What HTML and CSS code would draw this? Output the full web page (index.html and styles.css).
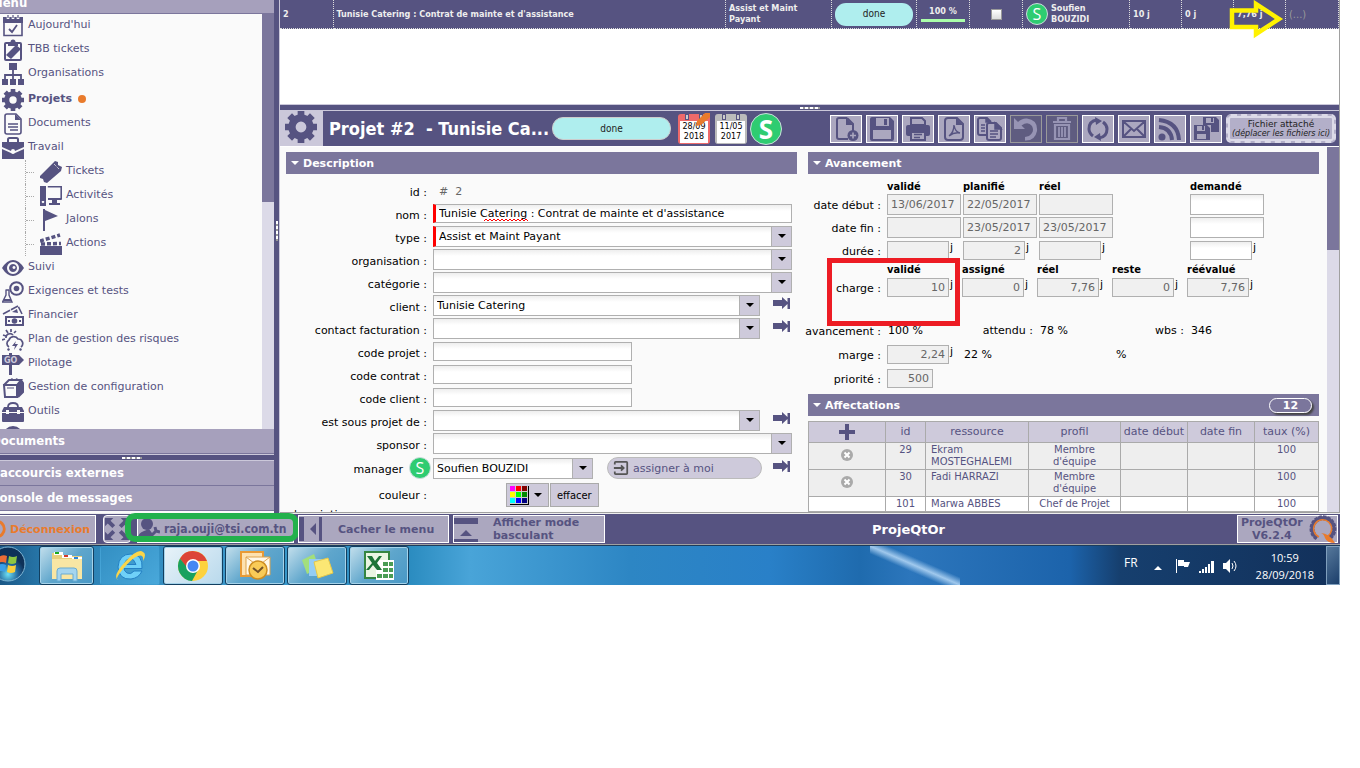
FILE: index.html
```html
<!DOCTYPE html>
<html lang="fr">
<head>
    <meta charset="UTF-8">
    <meta name="viewport" content="width=device-width, initial-scale=1.0">
    <title>ProjeQtOr</title>
    <link rel="stylesheet" href="styles.css">
</head>
<body>

<!-- icons -->
<svg class="sprite" aria-hidden="true">
    <symbol id="i-today" viewBox="0 0 22 22"><path d="M2 3h18v17.500H2z" fill="none" stroke="currentColor" stroke-width="1.600"/><path d="M1 2h20v6H1z"/><path d="M6 0v4M11 0v4M16 0v4" stroke="#fafafa" stroke-width="2.600"/><path d="M6 0v3M11 0v3M16 0v3" stroke="currentColor" stroke-width="1.200"/><path d="M7 14l3 3 5-7" fill="none" stroke="currentColor" stroke-width="1.800"/></symbol>
    <symbol id="i-tbb" viewBox="0 0 22 22"><rect x="3" y="4" width="16" height="17" rx="1" fill="none" stroke="currentColor" stroke-width="2"/><path d="M6 7V4h3a2 2 0 0 1 4 0h3v3z"/><circle cx="11" cy="3" r="2.500"/><path d="M4 16L14 6l5 4L9 20z"/></symbol>
    <symbol id="i-org" viewBox="0 0 22 22"><path d="M7 0h8v7H7zM0 16h6v6H0zM8 16h6v6H8zM16 16h6v6h-6z"/><path d="M11 6v11M3 17v-5h16v5" fill="none" stroke="currentColor" stroke-width="1.800"/></symbol>
    <symbol id="i-gear" viewBox="0 0 22 22"><circle cx="11" cy="11" r="6.200" fill="none" stroke="currentColor" stroke-width="5"/><path d="M11 0v4M11 18v4M0 11h4M18 11h4M3.200 3.200l3 3M15.800 15.800l3 3M3.200 18.800l3-3M15.800 6.200l3-3" stroke="currentColor" stroke-width="4.600"/></symbol>
    <symbol id="i-doc" viewBox="0 0 22 22"><path d="M5 1h9l5 5v13a2 2 0 0 1-2 2H5a2 2 0 0 1-2-2V3a2 2 0 0 1 2-2z" fill="none" stroke="currentColor" stroke-width="1.600"/><path d="M13 1v6h6z"/><path d="M6 11h10M6 14h10M8 17h8" stroke="currentColor" stroke-width="1.500"/></symbol>
    <symbol id="i-case" viewBox="0 0 22 22"><path d="M6 6V2.500Q6 1 7.500 1h7Q16 1 16 2.500V6" fill="none" stroke="currentColor" stroke-width="2"/><path d="M0 5h22v5l-9 4a2 2 0 0 0-4 0L0 10zM0 12l9 4q2 2 4 0l9-4v10H0z"/></symbol>
    <symbol id="i-ticket" viewBox="0 0 22 22"><path d="M0 15L15 0l3 1 0 3 4 2-1 4L7 22l-3-1-1-3-3-1z"/><path d="M14 3l5 5" stroke="#fafafa" stroke-dasharray="1 1"/></symbol>
    <symbol id="i-screen" viewBox="0 0 22 22"><path fill-rule="evenodd" d="M0 1h6v20H0zM2 16a1.300 1.300 0 1 0 2 0z"/><path d="M7.800 1.800h13.400V14H9" fill="none" stroke="currentColor" stroke-width="1.600"/><path d="M8 13h13v2H8zM12 15h5v3h3v2H9v-2h3z"/></symbol>
    <symbol id="i-flag" viewBox="0 0 22 22"><path d="M3 0h2v22H3zM5 1l13 6-13 5z"/></symbol>
    <symbol id="i-clap" viewBox="0 0 22 22"><path d="M0 13h22v9H0z"/><path d="M1 11l20-.500M0 8l20-6" stroke="currentColor" stroke-width="3.500" stroke-dasharray="4 2"/></symbol>
    <symbol id="i-eye" viewBox="0 0 22 22"><path fill-rule="evenodd" d="M0 11Q5 3 11 3t11 8q-5 8-11 8T0 11zm11-6a6 6 0 1 0 .010 0z"/><path fill-rule="evenodd" d="M11 7a4 4 0 1 0 .010 0zm1 2a1.500 1.500 0 1 1-.010 0z"/></symbol>
    <symbol id="i-test" viewBox="0 0 22 22"><circle cx="14.500" cy="7.500" r="6.300" fill="none" stroke="currentColor" stroke-width="2"/><circle cx="14.500" cy="7.500" r="2.800"/><path d="M3.500 9h4M4 9v5l-3.500 7h9.500L7 14V9" fill="none" stroke="currentColor" stroke-width="1.400"/><path d="M2 18h7v2H2z"/></symbol>
    <symbol id="i-money" viewBox="0 0 22 22"><path fill-rule="evenodd" d="M3 11h19v10H3zm2 2v6h15v-6z"/><circle cx="12.500" cy="16" r="2.800"/><path d="M6 16h2M17 16h2" stroke="currentColor" stroke-width="2"/><path d="M1 9L16 1l4 8" fill="none" stroke="currentColor" stroke-width="1.600" stroke-dasharray="8 1"/><path d="M10 7l5-3 1 4z"/></symbol>
    <symbol id="i-risk" viewBox="0 0 22 22"><path d="M1 6l3 1M4 1l2 3M9 0v3M14 2l-2 2M0 11l3-1M4 9a4 4 0 0 1 7-3M7 18a4 4 0 0 1 0-7 5 5 0 0 1 9-1 4.500 4.500 0 0 1 3 8" fill="none" stroke="currentColor" stroke-width="1.700"/><path d="M14 12l-4 5h3l-1 4 4-6h-3zM6 19l2 1-1 2-2-1zM18 19l2 1-1 2-2-1z"/></symbol>
    <symbol id="i-go" viewBox="0 0 22 22"><path d="M7 0h3v22H7z"/><path d="M0 2h17l5 5-5 5H0z"/><text x="2" y="10" font-size="8" font-weight="bold" fill="#cecadb">GO</text></symbol>
    <symbol id="i-box" viewBox="0 0 22 22"><path d="M2 8h13v12H3zM2 8l5-5h12l-4 5M19 3l2 3v9l-5 5" fill="none" stroke="currentColor" stroke-width="2"/><path d="M15 8l5-5 1 3v9l-5 5zM6 4l4-3 2 2 3-2 2 3z"/><path d="M5 11h7" stroke="currentColor"/></symbol>
    <symbol id="i-tools" viewBox="0 0 22 22"><path d="M6 6q0-4 5-4t5 4" fill="none" stroke="currentColor" stroke-width="1.800"/><path d="M2 6h18l2 4v10q0 1-1 1H1q-1 0-1-1V10z"/><path d="M0 11.500h22" stroke="#fafafa" stroke-width="1"/><path d="M4 9h3v4H4zM15 9h3v4h-3z" fill="#fafafa"/></symbol>
    <symbol id="i-globe" viewBox="0 0 22 22"><circle cx="11" cy="11" r="9" fill="none" stroke="currentColor" stroke-width="2"/><path d="M3 7q8-7 16 0M11 2v18" fill="none" stroke="currentColor" stroke-width="2"/></symbol>

    <symbol id="b-new" viewBox="0 0 26 24"><path d="M14 1H6Q4 1 4 3v17q0 2 2 2h9M14 1l6 6v7" fill="none" stroke="currentColor" stroke-width="2"/><path d="M13 1l7 7h-7z"/><circle cx="20" cy="18.500" r="5.500"/><path d="M20 15.500v6M17 18.500h6" stroke="#aba7bf" stroke-width="1.600"/></symbol>
    <symbol id="b-save" viewBox="0 0 26 24"><path fill-rule="evenodd" d="M3 0h18l4 4v18q0 2-2 2H3q-2 0-2-2V2q0-2 2-2zM7 1v8h13V1zM4 13v9h18v-9z"/><path d="M15 2h3v6h-3z"/></symbol>
    <symbol id="b-print" viewBox="0 0 26 24"><path d="M6 1h11l3 3v4H6z" fill="none" stroke="currentColor" stroke-width="2"/><path d="M3 8h20q2 0 2 2v7q0 2-2 2H3q-2 0-2-2v-7q0-2 2-2z"/><path d="M6 15h14v8H6z" fill="#aba7bf" stroke="currentColor" stroke-width="2"/><path d="M9 17.500h8M9 20.500h6" stroke="currentColor" stroke-width="1.500"/></symbol>
    <symbol id="b-pdf" viewBox="0 0 26 24"><path d="M16 1H7Q4 1 4 4v16q0 3 3 3h12q3 0 3-3V7z" fill="none" stroke="currentColor" stroke-width="2"/><path d="M15 1v7h7z"/><path d="M8 19q5-4 5-11 1 7 6 8-6-1-11 3z" fill="none" stroke="currentColor" stroke-width="1.400"/></symbol>
    <symbol id="b-copy" viewBox="0 0 26 24"><path d="M9 18H3q-2 0-2-2V3q0-2 2-2h7l4 4M12 6h7l5 5v10q0 2-2 2H12q-2 0-2-2V8q0-2 2-2z" fill="none" stroke="currentColor" stroke-width="2"/><path d="M18 6v6h6zM9 1v4h4zM4 8h4M4 11h4M4 14h4M13 14h8M13 17h8M13 20h6" stroke="currentColor" stroke-width="1.500"/></symbol>
    <symbol id="b-undo" viewBox="0 0 26 24"><path d="M1 1v11h11L8.500 8.500Q15 4 19 9q3 6-3 10l-4 1v3.500Q22 24 24 14 25 3 14 1.500 9 1 5 5z"/></symbol>
    <symbol id="b-trash" viewBox="0 0 26 24"><path d="M4 5h18M9 4V1h8v3M6 8h14v14H6z" fill="none" stroke="currentColor" stroke-width="2.200"/><path d="M10 10v10M13 10v10M16 10v10" stroke="currentColor" stroke-width="1.800"/></symbol>
    <symbol id="b-sync" viewBox="0 0 26 24"><path d="M12 3q-8 1-8 9 0 4 4 7M14 21q8-1 8-9 0-4-4-7" fill="none" stroke="currentColor" stroke-width="3"/><path d="M10 0l7 4-6 4zM16 24l-7-4 6-4z"/></symbol>
    <symbol id="b-mail" viewBox="0 0 26 24"><path d="M2 4h22v16H2zM3 5l10 9L23 5M3 19l7-7M23 19l-7-7" fill="none" stroke="currentColor" stroke-width="2"/></symbol>
    <symbol id="b-rss" viewBox="0 0 26 24"><circle cx="5" cy="20" r="3.500"/><path d="M2 10q12 1 13 13M2 3q19 2 20 20" fill="none" stroke="currentColor" stroke-width="4"/></symbol>
    <symbol id="b-multi" viewBox="0 0 26 24"><path fill-rule="evenodd" d="M10 0h13l3 3v12h-8V8h-8zm3 1v5h8V1zM1 8h13l3 3v12H1zm3 1v5h8V9zm0 8v5h9v-5z"/><path d="M9 9h2v4H9zM18 1h2v4h-2z"/></symbol>
    <symbol id="goto" viewBox="0 0 17 12"><path d="M0 3h9V0l5.500 5V1H17v11h-2.500V7L9 12V9H0z"/></symbol>
</svg>

<div class="desktop">
    <div class="app">
        <nav class="left">
            <h2 class="bar menuBar">Menu</h2>
            <div class="tree">
                <ul class="menu">
                    <li><svg><use href="#i-today"/></svg><a href="#">Aujourd'hui</a></li>
                    <li><svg><use href="#i-tbb"/></svg><a href="#">TBB tickets</a></li>
                    <li><svg><use href="#i-org"/></svg><a href="#">Organisations</a></li>
                    <li class="current"><svg><use href="#i-gear"/></svg><a href="#">Projets</a><i class="dot"></i></li>
                    <li><svg><use href="#i-doc"/></svg><a href="#">Documents</a></li>
                    <li><svg><use href="#i-case"/></svg><a href="#">Travail</a></li>
                    <li class="sub"><svg><use href="#i-ticket"/></svg><a href="#">Tickets</a></li>
                    <li class="sub"><svg><use href="#i-screen"/></svg><a href="#">Activités</a></li>
                    <li class="sub"><svg><use href="#i-flag"/></svg><a href="#">Jalons</a></li>
                    <li class="sub"><svg><use href="#i-clap"/></svg><a href="#">Actions</a></li>
                    <li><svg><use href="#i-eye"/></svg><a href="#">Suivi</a></li>
                    <li><svg><use href="#i-test"/></svg><a href="#">Exigences et tests</a></li>
                    <li><svg><use href="#i-money"/></svg><a href="#">Financier</a></li>
                    <li><svg><use href="#i-risk"/></svg><a href="#">Plan de gestion des risques</a></li>
                    <li><svg><use href="#i-go"/></svg><a href="#">Pilotage</a></li>
                    <li><svg><use href="#i-box"/></svg><a href="#">Gestion de configuration</a></li>
                    <li><svg><use href="#i-tools"/></svg><a href="#">Outils</a></li>
                    <li><svg><use href="#i-globe"/></svg></li>
                </ul>
                <div class="scroll"><div class="thumb menuThumb"></div></div>
            </div>
            <h2 class="bar">Documents</h2>
            <div class="hsplit"><i class="grip"></i></div>
            <h2 class="bar">Raccourcis externes</h2>
            <h2 class="bar">Console de messages</h2>
        </nav>
        <div class="vsplit"><i class="grip vertical"></i></div>

        <main class="main">
            <div class="planning">
                <table class="list">
                    <colgroup><col class="cId"><col><col class="cType"><col class="cState"><col class="cPct"><col class="cPct"><col class="cWho"><col class="cLoad"><col class="cLoad"><col class="cLoad"><col class="cMore"></colgroup>
                    <tr>
                        <td>2</td>
                        <td>Tunisie Catering : Contrat de mainte et d'assistance</td>
                        <td>Assist et Maint<br>Payant</td>
                        <td class="mid"><span class="pill small">done</span></td>
                        <td class="mid"><span class="progress">100 %</span></td>
                        <td class="mid"><input type="checkbox" class="check" aria-label="sélection"></td>
                        <td><div class="who"><span class="avatar">S</span><span>Soufien<br>BOUZIDI</span></div></td>
                        <td>10 j</td>
                        <td>0 j</td>
                        <td class="anchor">7,76 j
                            <svg class="arrowMark" viewBox="0 0 58 40"><path d="M4 11.500h24V5l23 15-23 15v-7H4z" fill="none" stroke="#fff200" stroke-width="4.500"/></svg>
                        </td>
                        <td class="more">(...)</td>
                    </tr>
                </table>
            </div>
            <div class="hsplit"><i class="grip"></i></div>

            <header class="title">
                <span class="titleIcon"><svg><use href="#i-gear"/></svg></span>
                <h1>Projet #2 &nbsp;- Tunisie Ca...</h1>
                <span class="pill">done</span>
                <span class="cal red"><i></i><i></i><b>28/09<br>2018</b><svg viewBox="0 0 14 14"><path d="M0 14l1-5 8-8h5v4l-9 8z" fill="#e97b2c"/></svg></span>
                <span class="cal"><i></i><i></i><b>11/05<br>2017</b></span>
                <span class="avatar big">S</span>
                <div class="tools">
                    <button aria-label="nouveau"><svg><use href="#b-new"/></svg></button>
                    <button aria-label="enregistrer"><svg><use href="#b-save"/></svg></button>
                    <button aria-label="imprimer"><svg><use href="#b-print"/></svg></button>
                    <button aria-label="pdf"><svg><use href="#b-pdf"/></svg></button>
                    <button aria-label="copier"><svg><use href="#b-copy"/></svg></button>
                    <button aria-label="annuler" class="off"><svg><use href="#b-undo"/></svg></button>
                    <button aria-label="supprimer" class="off"><svg><use href="#b-trash"/></svg></button>
                    <button aria-label="rafraîchir"><svg><use href="#b-sync"/></svg></button>
                    <button aria-label="mail"><svg><use href="#b-mail"/></svg></button>
                    <button aria-label="flux"><svg><use href="#b-rss"/></svg></button>
                    <button aria-label="multiple"><svg><use href="#b-multi"/></svg></button>
                    <button class="attach">Fichier attaché<em>(déplacer les fichiers ici)</em></button>
                </div>
            </header>

            <div class="detail">
                <div class="columns">
                    <section>
                        <h3>Description</h3>
                        <div class="form">
                            <div class="row first"><span class="label">id :</span><span class="ident"># &nbsp;2</span></div>
                            <div class="row"><label for="nom">nom :</label><div class="spell"><input id="nom" class="required" type="text" spellcheck="false" value="Tunisie Catering : Contrat de mainte et d'assistance"><svg viewBox="0 0 46 3"><path d="M0 2l2-2 2 2 2-2 2 2 2-2 2 2 2-2 2 2 2-2 2 2 2-2 2 2 2-2 2 2 2-2 2 2 2-2 2 2 2-2 2 2 2-2 2 2" fill="none" stroke="#f00"/></svg></div></div>
                            <div class="row"><label for="type">type :</label><div class="combo"><select id="type" class="required"><option>Assist et Maint Payant</option></select></div></div>
                            <div class="row"><label for="orga">organisation :</label><div class="combo"><select id="orga"><option></option></select></div></div>
                            <div class="row"><label for="cat">catégorie :</label><div class="combo"><select id="cat"><option></option></select></div></div>
                            <div class="row"><label for="client">client :</label><div class="combo"><select id="client"><option>Tunisie Catering</option></select></div><svg class="goto"><use href="#goto"/></svg></div>
                            <div class="row"><label for="contact">contact facturation :</label><div class="combo"><select id="contact"><option></option></select></div><svg class="goto"><use href="#goto"/></svg></div>
                            <div class="row"><label for="cprojet">code projet :</label><input id="cprojet" class="short" type="text"></div>
                            <div class="row"><label for="ccontrat">code contrat :</label><input id="ccontrat" class="short" type="text"></div>
                            <div class="row"><label for="cclient">code client :</label><input id="cclient" class="short" type="text"></div>
                            <div class="row"><label for="parent">est sous projet de :</label><div class="combo"><select id="parent"><option></option></select></div><svg class="goto"><use href="#goto"/></svg></div>
                            <div class="row"><label for="sponsor">sponsor :</label><div class="combo"><select id="sponsor"><option></option></select></div></div>
                            <div class="row tall manager"><label for="manager">manager</label><span class="avatar">S</span><div class="combo person"><select id="manager"><option>Soufien BOUZIDI</option></select></div><button class="assign"><svg viewBox="0 0 18 18"><path d="M2 5V3q0-1 1-1h12q1 0 1 1v12q0 1-1 1H3q-1 0-1-1v-2M1 9h11M9 6l3 3-3 3" fill="none" stroke="#555" stroke-width="2"/></svg>assigner à moi</button><svg class="goto"><use href="#goto"/></svg></div>
                            <div class="row tall"><span class="label">couleur :</span>
                                <div class="colour"><button class="grey" aria-label="choisir"><span class="palette"><i></i><i></i><i></i><i></i><i></i><i></i><i></i><i></i><i></i></span><i class="down"></i></button><button class="grey">effacer</button></div>
                            </div>
                            <div class="caption">description :</div>
                        </div>
                    </section>

                    <section>
                        <h3>Avancement</h3>
                        <div class="grid">
                            <b class="c2">validé</b><b>planifié</b><b>réel</b><b class="c6">demandé</b>
                            <label for="dd1" class="c1">date début :</label><input id="dd1" readonly value="13/06/2017"><input readonly value="22/05/2017" aria-label="début planifié"><input readonly aria-label="début réel"><input class="c6" aria-label="début demandé">
                            <label for="df1" class="c1">date fin :</label><input id="df1" readonly><input readonly value="23/05/2017" aria-label="fin planifiée"><input readonly value="23/05/2017" aria-label="fin réelle"><input class="c6" aria-label="fin demandée">
                            <label for="du1" class="c1">durée :</label><span class="unit"><input id="du1" readonly>j</span><span class="unit"><input readonly value="2" aria-label="durée planifiée">j</span><span class="unit"><input readonly aria-label="durée réelle">j</span><span class="unit c6"><input aria-label="durée demandée">j</span>
                        </div>
                        <div class="grid load">
                            <b class="c2">validé</b><b>assigné</b><b>réel</b><b>reste</b><b>réévalué</b>
                            <label for="ch1" class="c1">charge :</label><span class="unit anchor"><input id="ch1" readonly value="10">j<i class="redMark"></i></span><span class="unit"><input readonly value="0" aria-label="assigné">j</span><span class="unit"><input readonly value="7,76" aria-label="réel">j</span><span class="unit"><input readonly value="0" aria-label="reste">j</span><span class="unit"><input readonly value="7,76" aria-label="réévalué">j</span>
                        </div>
                        <div class="grid figures">
                            <span class="label c1">avancement :</span><span>100 %</span><span class="label">attendu :</span><span>78 %</span><span class="label wbs">wbs :</span><span class="c6">346</span>
                            <label for="marge" class="c1">marge :</label><span class="unit"><input id="marge" readonly value="2,24">j</span><span>22 %</span><span class="c5">%</span>
                            <label for="prio" class="c1">priorité :</label><span class="unit narrow"><input id="prio" readonly value="500"></span>
                        </div>

                        <h3>Affectations<span class="count">12</span></h3>
                        <table class="assigned">
                            <colgroup><col class="aAdd"><col class="aId"><col class="aRes"><col class="aProf"><col class="aDate"><col class="aDate"><col></colgroup>
                            <tr><th><svg class="plus" viewBox="0 0 16 16"><path d="M6 0h4v6h6v4h-6v6H6v-6H0V6h6z"/></svg></th><th>id</th><th>ressource</th><th>profil</th><th>date début</th><th>date fin</th><th>taux (%)</th></tr>
                            <tr class="closed"><td><svg class="cross" viewBox="0 0 12 12"><circle cx="6" cy="6" r="6"/><path d="M3.500 3.500l5 5M8.500 3.500l-5 5" stroke="#fff" stroke-width="2"/></svg></td><td>29</td><td>Ekram MOSTEGHALEMI</td><td>Membre d'équipe</td><td></td><td></td><td>100</td></tr>
                            <tr class="closed"><td><svg class="cross" viewBox="0 0 12 12"><circle cx="6" cy="6" r="6"/><path d="M3.500 3.500l5 5M8.500 3.500l-5 5" stroke="#fff" stroke-width="2"/></svg></td><td>30</td><td>Fadi HARRAZI</td><td>Membre d'équipe</td><td></td><td></td><td>100</td></tr>
                            <tr><td></td><td>101</td><td>Marwa ABBES</td><td>Chef de Projet</td><td></td><td></td><td>100</td></tr>
                        </table>
                    </section>
                </div>
                <div class="scroll"><div class="thumb detailThumb"></div></div>
            </div>
        </main>
    </div>

    <footer class="status">
        <button class="logout"><svg viewBox="0 0 20 20"><circle cx="6" cy="10" r="8" fill="none" stroke="#e97b2c" stroke-width="3"/></svg>Déconnexion</button>
        <button class="full" aria-label="plein écran"><svg viewBox="0 0 28 26"><path d="M1 1h9L7 4l5 5-3 3-5-5-3 3zM27 1v9l-3-3-5 5-3-3 5-5-3-3zM1 25v-9l3 3 5-5 3 3-5 5 3 3zM27 25h-9l3-3-5-5 3-3 5 5 3-3z"/></svg></button>
        <button class="user"><svg viewBox="0 0 22 22"><circle cx="9" cy="6" r="6"/><path d="M0 20q0-5 6-7l5-2 3 4 2 6H1z"/><path d="M11 20l8-8M17 9l1 4 4 1" fill="none" stroke="currentColor" stroke-width="3"/></svg>raja.ouji@tsi.com.tn<i class="greenMark"></i></button>
        <button class="hide"><svg viewBox="0 0 24 26"><path d="M0 1h5v24H0zM11 13l6-6v12zM20 1h3v24h-3z"/></svg><span>Cacher le menu</span></button>
        <button class="mode"><svg viewBox="0 0 24 25"><path d="M0 1h24v6H0zM6 19l6-6 6 6zM0 22h24v3H0z"/></svg><span>Afficher mode<br>basculant</span></button>
        <strong>ProjeQtOr</strong>
        <button class="version"><span>ProjeQtOr<br>V6.2.4</span><svg viewBox="0 0 28 28"><path d="M8 23a11 11 0 1 1 12 0" fill="none" stroke="#565381" stroke-width="5" stroke-dasharray="3 1"/><path d="M8 23a11 11 0 1 1 12 0" fill="none" stroke="#565381" stroke-width="3"/><path d="M10 22a9 9 0 1 1 9-1" fill="none" stroke="#e97b2c" stroke-width="1.500"/><path d="M12 18q8 0 14 10-8 0-10-5-1-4-4-5z" fill="#e97b2c"/></svg></button>
    </footer>

    <div class="taskbar">
        <button class="orb" aria-label="Démarrer"><svg viewBox="0 0 36 36"><defs><radialGradient id="orb" cy=".8"><stop offset="0" stop-color="#6ee0f5"/><stop offset=".6" stop-color="#22659b"/><stop offset="1" stop-color="#0e3158"/></radialGradient></defs><circle cx="18" cy="18" r="17" fill="url(#orb)" stroke="#7fb5d3"/><path d="M9 11q4-3 8-1l-1 7q-4-2-8 0z" fill="#ec6c35"/><path d="M19 10q4 2 8 0l-1 7q-4 2-8 0z" fill="#8dc641"/><path d="M8 19q4-2 8 0l-1 7q-4-2-8 0z" fill="#3aa0e8"/><path d="M18 19q4 2 8 0l-1 7q-4 2-8 0z" fill="#fbcf3b"/></svg></button>
        <button class="task double" aria-label="Explorateur"><svg viewBox="0 0 34 32"><path d="M2 3h10l2 3h18v22H2z" fill="#e8cf7c"/><path d="M4 2h9v3H4zM12 5h10v3H12zM22 7h10v3H22z" fill="#fff"/><path d="M5 2h4v2H5z" fill="#1ca91c"/><path d="M14 5h4v2h-4z" fill="#d43a2a"/><path d="M24 7h4v2h-4z" fill="#2b84d8"/><path d="M2 9h30v20H2z" fill="#f8e6a4"/><path d="M7 31V21q0-3 3-3h14q3 0 3 3v10h-4v-7H11v7z" fill="#a5d5ef" stroke="#69abd2"/></svg></button>
        <button class="task plain" aria-label="Internet Explorer"><svg viewBox="0 0 34 32"><path d="M11 18.500h18Q30 4 18 4T5 17q1 13 13 12 8-1 11-8H21q-3 4-7 2-3-2-3-4.500zm0-4q2-6 6-6t6 6z" fill="#6fd0f8" stroke="#2480c4"/><path d="M5 30Q-1 26 12 12T30 2q4 2 0 9 1-7-5-5T10 19 5 30z" fill="#fbd549"/></svg></button>
        <button class="task active" aria-label="Chrome"><svg viewBox="0 0 32 32"><circle cx="16" cy="16" r="15" fill="#fdd23e"/><path d="M3 8.500a15 15 0 0 1 27 2.500H16l-6 8z" fill="#dc4437"/><path d="M3 8.500A15 15 0 0 0 15 31l6-11h-9z" fill="#19a15f"/><circle cx="16" cy="16" r="7" fill="#fff"/><circle cx="16" cy="16" r="5.500" fill="#4587f3"/></svg></button>
        <button class="task" aria-label="Outlook"><svg viewBox="0 0 34 32"><path d="M3 2h22v24H3z" fill="#fde2b0" stroke="#e89a35" stroke-width="2"/><path d="M8 7h24v18H8z" fill="#fff8e8" stroke="#dca34e"/><path d="M8 7l12 9 12-9" fill="none" stroke="#dca34e"/><circle cx="20" cy="20" r="9" fill="#f9cb57" stroke="#cf8e20" stroke-width="1.500"/><path d="M15 18l5 4 5-5" fill="none" stroke="#735229" stroke-width="2"/></svg></button>
        <button class="task" aria-label="Pense-bête"><svg viewBox="0 0 34 32"><path d="M2 10l12-6 5 14-12 6z" fill="#a3df7c"/><path d="M9 9h15v17H9z" fill="#94cdf4"/><path d="M14 12l14-4 5 15-15 5z" fill="#fbe774" stroke="#e4c84b"/></svg></button>
        <button class="task" aria-label="Excel"><svg viewBox="0 0 34 32"><path d="M3 2h24v26H3z" fill="#eaf5e3" stroke="#358542" stroke-width="2"/><path d="M14 10h18v20H14z" fill="#fff"/><path d="M21 12h5v4h-5zM27 12h4v4h-4zM21 18h5v4h-5zM27 18h4v4h-4zM15 24h5v4h-5zM21 24h5v4h-5zM27 24h4v4h-4z" fill="#4a9c54"/><path d="M5 6h5l3 5 4-5h3l-5 7 5 7h-5l-4-5-4 5H4l6-7z" fill="#1d7438"/></svg></button>
        <div class="tray">
            <span class="lang">FR</span>
            <svg class="up" viewBox="0 0 9 5"><path d="M0 5l4-4 4 4z"/></svg>
            <svg class="flag" viewBox="0 0 16 16"><path d="M1 1h1v14H1zM3 2h6v2h6l-2 5H9V8H3z"/></svg>
            <svg class="signal" viewBox="0 0 16 12"><path d="M0 10h2v2H0zM3 8h2v4H3zM6 6h2v6H6zM9 3h2v9H9zM12 0h3v12h-3z"/></svg>
            <svg class="sound" viewBox="0 0 16 14"><path d="M0 4h3l4-4v14l-4-4H0z"/><path d="M9 4q2 3 0 6M11 2q4 5 0 10" fill="none" stroke="#fff"/></svg>
            <span class="clock">10:59<br>28/09/2018</span>
        </div>
        <button class="show" aria-label="Bureau"></button>
    </div>
</div>

</body>
</html>
```
FILE: styles.css
```css
* {
    box-sizing: border-box;
}
body {
    margin: 0;
    overflow: hidden;
    background: #fff;
    font-family: "DejaVu Sans", sans-serif;
    font-size: 11px;
    color: #000;
}
h1, h2, h3, ul {
    margin: 0;
    padding: 0;
}
button, input, select {
    font: inherit;
    margin: 0;
    border-radius: 0;
}
button {
    padding: 0;
}
svg {
    fill: currentColor;
    flex: none;
}
.sprite {
    display: block;
    width: 0;
    height: 0;
}
.anchor {
    position: relative;
}

/* the window starts a little off the left edge */
.desktop {
    display: flex;
    flex-direction: column;
    height: calc(100vh - 183px);
    margin-left: -10px;
    margin-right: 20px;
}
.app {
    flex: 1;
    display: flex;
    min-height: 0;
    background: #565381;
    border-right: 1px solid #a0a0a0;
}

/* left menu */
.left {
    width: 284px;
    display: flex;
    flex-direction: column;
    background: #fafafa;
    padding-bottom: 2px;
}
.bar {
    flex: none;
    height: 25px;
    padding-left: 1px;
    line-height: 24px;
    font-family: "DejaVu Sans Condensed", "DejaVu Sans", sans-serif;
    font-size: 13px;
    color: #fff;
    background: #a6a0bc;
    border-bottom: 1px solid #7b769c;
}
.menuBar {
    display: flex;
    align-items: flex-end;
    height: 14px;
    line-height: 20px;
    overflow: hidden;
}
.tree {
    flex: 1;
    display: flex;
    min-height: 0;
    overflow: hidden;
}
.menu {
    flex: 1;
    list-style: none;
    padding-left: 12px;
}
.menu li {
    display: flex;
    align-items: center;
    height: 24px;
}
.menu svg {
    width: 22px;
    height: 22px;
    color: #565381;
}
.menu a {
    margin: 0 0 3px 4px;
    color: #565381;
    text-decoration: none;
}
.menu .current {
    height: 26px;
    padding-top: 2px;
    font-weight: bold;
}
.dot {
    width: 8px;
    height: 8px;
    margin: 0 0 2px 6px;
    border-radius: 50%;
    background: #e97b2c;
}
.menu .sub {
    margin-left: 23px;
    border-left: 1px dotted #aaa;
}
.menu .sub::before {
    content: "";
    width: 8px;
    margin-right: 6px;
    border-top: 1px dotted #aaa;
}
.scroll {
    width: 12px;
    background: #dcdae8;
}
.thumb {
    background: #7b769c;
}
.menuThumb {
    height: 188px;
}
.detailThumb {
    height: 103px;
}
.hsplit {
    flex: none;
    display: flex;
    justify-content: center;
    align-items: center;
    height: 7px;
    background: #565381;
    border: solid #cbc8da;
    border-width: 1px 0;
}
.vsplit {
    width: 6px;
    display: flex;
    align-items: center;
    justify-content: center;
    padding-bottom: 52px;
    border-right: 1px solid #cbc8da;
}
.grip {
    width: 20px;
    height: 2px;
    background: repeating-linear-gradient(90deg, #fff 0 3px, #999 3px 5px);
}
.grip.vertical {
    width: 2px;
    height: 20px;
    background: repeating-linear-gradient(#fff 0 3px, #999 3px 5px);
}

/* planning line */
.main {
    flex: 1;
    min-width: 0;
    display: flex;
    flex-direction: column;
}
.planning {
    flex: none;
    height: 104px;
    background: #fff;
}
.list {
    width: 100%;
    height: 29px;
    table-layout: fixed;
    border-collapse: collapse;
    background: #565381;
    color: #eee;
    font-family: "DejaVu Sans Condensed", "DejaVu Sans", sans-serif;
    font-size: 9px;
    font-weight: bold;
    line-height: 11px;
}
.list td {
    padding: 0 3px;
    border-right: 1px dotted #ddd;
    border-bottom: 1px dotted #ddd;
}
.list .mid {
    text-align: center;
}
.cId {
    width: 53px;
}
.cType {
    width: 106px;
}
.cState {
    width: 85px;
}
.cPct, .cMore {
    width: 53px;
}
.cWho {
    width: 107px;
}
.cLoad {
    width: 52px;
}
.list .more {
    color: #999;
    font-size: 11px;
    font-weight: normal;
}
.pill {
    width: 119px;
    height: 23px;
    border: 1px solid #ccc;
    border-radius: 11px;
    background: #afeeee;
    color: #222;
    font-family: "DejaVu Sans Condensed", "DejaVu Sans", sans-serif;
    font-size: 10px;
    font-weight: normal;
    line-height: 21px;
    text-align: center;
}
.pill.small {
    display: block;
    width: 78px;
    border: 0;
}
.progress {
    display: block;
    margin: 0 1px;
    padding-bottom: 2px;
    border-bottom: 3px solid #aaffaa;
}
.check {
    appearance: none;
    width: 11px;
    height: 11px;
    border: 1px solid #999;
    background: linear-gradient(#fff, #ddd);
    vertical-align: middle;
}
.who {
    display: flex;
    align-items: center;
    gap: 3px;
}
.avatar {
    flex: none;
    width: 22px;
    height: 22px;
    border: 1px solid #cdd;
    border-radius: 50%;
    background: #2ecc71;
    color: #fff;
    font-family: "Open Sans", sans-serif;
    font-size: 16px;
    font-weight: normal;
    line-height: 20px;
    text-align: center;
}
.avatar.big {
    width: 32px;
    height: 32px;
    font-size: 26px;
    font-weight: bold;
    line-height: 30px;
}
.arrowMark {
    position: absolute;
    left: -6px;
    top: -1px;
    width: 58px;
    height: 40px;
}

/* title bar */
.title {
    flex: none;
    display: flex;
    align-items: center;
    height: 36px;
    padding-right: 3px;
    border-bottom: 1px solid #fff;
}
.titleIcon {
    width: 43px;
    height: 35px;
    padding-left: 5px;
    background: #cbc8da;
    color: #565381;
}
.titleIcon svg {
    width: 32px;
    height: 32px;
}
.title h1 {
    width: 223px;
    margin: 0 0 0 6px;
    color: #fff;
    font: bold 18px "DejaVu Sans Condensed", sans-serif;
    white-space: nowrap;
}
.cal {
    position: relative;
    display: flex;
    flex-wrap: wrap;
    justify-content: space-around;
    width: 32px;
    height: 30px;
    margin: 0 0 0 5px;
    padding: 0 2px;
    border-radius: 3px;
    background: #bbb;
}
.pill + .cal {
    margin-left: 7px;
}
.cal.red {
    background: #ee6a6a;
}
.cal i {
    width: 4px;
    height: 6px;
    border: 1px solid #565381;
    background: #ccc;
}
.cal b {
    width: 28px;
    height: 22px;
    padding-top: 1px;
    background: #fff;
    font: 8px/10px "DejaVu Sans", sans-serif;
    text-align: center;
}
.cal svg {
    position: absolute;
    right: 0;
    top: -2px;
    width: 14px;
    height: 14px;
}
.title .avatar {
    margin-left: 3px;
}
.tools {
    display: flex;
    align-items: center;
    gap: 4px;
    margin-left: auto;
}
.tools button {
    width: 32px;
    height: 28px;
    border: 1px solid #fff;
    background: #aba7bf;
    color: #565381;
}
.tools svg {
    display: block;
    width: 26px;
    height: 24px;
    margin: auto;
}
.tools .off {
    background: #5f5c80;
    border-color: #9a9a9a;
    color: #9794b4;
}
.tools .attach {
    width: 110px;
    height: 29px;
    border: 2px dashed #dcdae8;
    border-radius: 5px;
    background: #b3afc9;
    box-shadow: inset 0 0 0 2px #dcdae8;
    color: #222;
    font: 9px/9px "DejaVu Sans", sans-serif;
    white-space: nowrap;
}
.attach em {
    display: block;
    font-size: 8px;
}

/* detail form */
.detail {
    flex: 1;
    display: flex;
    min-height: 0;
    overflow: hidden;
    background: #fafafa;
    border-bottom: 1px solid #a0a0a0;
}
.columns {
    flex: 1;
    display: grid;
    grid-template-columns: 1fr 1fr;
    gap: 11px;
    align-items: start;
    padding: 5px 8px 0 6px;
}
h3 {
    display: flex;
    align-items: center;
    height: 22px;
    padding: 0 7px 0 5px;
    background: #7b769c;
    color: #fff;
    font: bold 11px "DejaVu Sans", sans-serif;
}
h3::before, .down {
    content: "";
    margin-right: 4px;
    border: 4px solid transparent;
    border-top-color: #fff;
    border-bottom: 0;
}
.count {
    width: 43px;
    height: 15px;
    margin-left: auto;
    border: 1px solid #fff;
    border-radius: 8px;
    box-shadow: 2px 2px 2px #444;
    line-height: 13px;
    text-align: center;
}
.form {
    padding-top: 6px;
}
.row {
    display: flex;
    align-items: center;
    height: 23px;
}
.row.first {
    height: 22px;
}
.row.tall {
    height: 26px;
}
.row label, .row .label {
    width: 141px;
    margin-right: 6px;
    padding-top: 3px;
    text-align: right;
}
.row.manager label {
    width: 117px;
}
.manager .avatar {
    margin-right: 2px;
}
.ident {
    padding-left: 6px;
    color: #666;
}
.caption {
    padding: 1px 4px;
}
input[type="text"], .grid input, select {
    height: 19px;
    padding: 0 4px;
    border: 1px solid #b0b0b0;
    background: linear-gradient(#eee, #fff 6px);
    color: #000;
}
.spell {
    position: relative;
    flex: 1;
    margin-right: 5px;
}
.spell input {
    display: block;
    width: 100%;
}
.spell svg {
    position: absolute;
    left: 51px;
    top: 15px;
    width: 46px;
    height: 3px;
}
input[type="text"].short {
    width: 199px;
}
.combo {
    position: relative;
    flex: 1;
    margin-right: 5px;
}
.combo select {
    display: block;
    width: 100%;
    height: 21px;
    appearance: none;
    padding: 0 20px 0 3px;
}
.combo::before {
    content: "";
    position: absolute;
    top: 1px;
    right: 1px;
    bottom: 1px;
    width: 19px;
    border-left: 1px solid #b0b0b0;
    background: #cecadb;
    pointer-events: none;
}
.combo::after {
    content: "";
    position: absolute;
    top: 8px;
    right: 6px;
    border: 4px solid transparent;
    border-top-color: #000;
    border-bottom: 0;
    pointer-events: none;
}
input[type="text"].required, select.required {
    border-left: 3px solid #f00;
    padding-left: 3px;
}
.goto {
    width: 17px;
    height: 12px;
    margin: 0 7px 5px 8px;
    color: #565381;
}
.combo.person {
    flex: none;
    width: 160px;
    margin-right: 14px;
}
.assign {
    display: flex;
    align-items: center;
    gap: 4px;
    width: 155px;
    height: 22px;
    padding: 0 5px;
    border: 1px solid #bbb;
    border-radius: 11px;
    background: #cecadb;
    color: #565381;
}
.assign svg {
    width: 16px;
    height: 18px;
}
.assign + .goto {
    margin-left: auto;
}
.colour {
    display: flex;
    gap: 1px;
    padding: 2px 0 0 73px;
}
.grey {
    display: flex;
    align-items: center;
    gap: 5px;
    height: 24px;
    padding: 0 2px 0 3px;
    border: 1px solid #aaa;
    background: #cecadb;
}
.grey:last-child {
    padding: 0 6px;
    font-family: "DejaVu Sans Condensed", "DejaVu Sans", sans-serif;
}
.down {
    border-top-color: #000;
}
.palette {
    display: grid;
    grid-template-columns: repeat(3, 5px);
    gap: 1px;
    padding: 0 1px 1px 0;
    background: #ccc;
    border: solid #000;
    border-width: 0 1px 1px 0;
}
.palette i {
    height: 5px;
    background: #f0f;
}
.palette i:nth-child(2) { background: #f00; }
.palette i:nth-child(3) { background: #800000; }
.palette i:nth-child(4) { background: #ff0; }
.palette i:nth-child(5) { background: #0f0; }
.palette i:nth-child(6) { background: #080; }
.palette i:nth-child(7) { background: #0ff; }
.palette i:nth-child(8) { background: #00f; }
.palette i:nth-child(9) { background: #000080; }

/* progress block */
.grid {
    display: grid;
    grid-template-columns: 79px 76px 76px 76px 75px 76px;
    grid-template-rows: 13px 23px 23px 23px;
    align-items: center;
    padding-top: 6px;
}
.grid b {
    font-family: "DejaVu Sans Condensed", "DejaVu Sans", sans-serif;
}
.grid.load {
    grid-template-columns: 79px repeat(5, 75px);
    grid-template-rows: 13px 23px;
    padding-top: 1px;
}
.grid.figures {
    grid-template-rows: 24px 24px 24px;
    padding: 19px 0 4px;
}
.c1 {
    grid-column: 1;
    padding: 2px 6px 0 0;
    text-align: right;
    white-space: nowrap;
}
.c2 {
    grid-column: 2;
}
.c6 {
    grid-column: 6;
}
.figures > span {
    padding-left: 1px;
}
.figures > .label {
    padding-right: 6px;
    text-align: right;
}
.figures > .c1 {
    justify-self: end;
}
.figures > .wbs, .figures > .c5 {
    grid-column: 5;
}
.grid input {
    width: 74px;
    height: 21px;
    padding: 0 3px;
}
.grid input[readonly] {
    background: #f0f0f0;
    color: #666;
}
.unit {
    display: flex;
    gap: 1px;
}
.grid .unit input {
    width: 62px;
    height: 19px;
    text-align: right;
}
.figures > .unit {
    padding-left: 0;
}
.grid .narrow input {
    width: 46px;
}
.redMark {
    position: absolute;
    left: -60px;
    top: -20px;
    width: 133px;
    height: 68px;
    border: 5px solid #ed1c24;
}

/* assignments */
.assigned {
    width: 100%;
    margin-top: 5px;
    table-layout: fixed;
    border-collapse: collapse;
    background: #fff;
    color: #565381;
    font-size: 10px;
    line-height: 12px;
}
.assigned th {
    height: 21px;
    padding: 0;
    border: 1px solid #aaa;
    background: #cecadb;
    font-size: 11px;
    font-weight: normal;
}
.assigned td {
    padding: 1px 5px;
    border: 1px solid #aaa;
    text-align: center;
    vertical-align: top;
}
.assigned td:nth-child(3) {
    text-align: left;
}
.closed {
    background: #eee;
}
.plus {
    display: block;
    width: 16px;
    height: 16px;
    margin: auto;
}
.cross {
    display: block;
    width: 12px;
    height: 12px;
    margin: 5px auto 0;
    color: #aaa;
}
.aAdd {
    width: 77px;
}
.aId {
    width: 40px;
}
.aRes {
    width: 103px;
}
.aProf {
    width: 92px;
}
.aDate {
    width: 67px;
}

/* status bar */
.status {
    flex: none;
    display: flex;
    align-items: center;
    height: 32px;
    background: #565381;
    border-top: 1px solid #eee;
    border-bottom: 1px solid #a0a0a0;
}
.status button {
    position: relative;
    display: flex;
    align-items: center;
    height: 28px;
    border: 1px solid #fff;
    background: #aba7bf;
    color: #565381;
    font-size: 11px;
    font-weight: bold;
    line-height: 13px;
    text-align: left;
    white-space: nowrap;
}
.status .logout {
    width: 106px;
    color: #e97b2c;
}
.logout svg {
    width: 19px;
    height: 20px;
}
.status .full {
    width: 28px;
    margin-left: 7px;
    border-radius: 4px;
}
.full svg {
    width: 26px;
    height: 24px;
}
.status .user {
    width: 157px;
    margin: 0 4px 0 6px;
    gap: 4px;
    font-family: "DejaVu Sans Condensed", sans-serif;
    font-size: 12px;
}
.user svg {
    width: 22px;
    height: 22px;
}
.greenMark {
    position: absolute;
    left: -13px;
    top: -3px;
    width: 174px;
    height: 29px;
    border: 6px solid #22b14c;
    border-radius: 10px;
}
.status .hide {
    width: 151px;
}
.hide svg {
    width: 24px;
    height: 26px;
}
.hide span, .mode span {
    margin-left: 15px;
}
.status .mode {
    width: 152px;
    margin-left: 4px;
}
.mode svg {
    width: 24px;
    height: 25px;
}
.status strong {
    flex: 1;
    padding-right: 25px;
    color: #fff;
    font-size: 13px;
    text-align: center;
}
.status .version {
    width: 101px;
    justify-content: space-between;
    margin-right: 2px;
    padding-left: 3px;
    text-align: center;
}
.version svg {
    width: 28px;
    height: 28px;
}

/* windows bar */
.taskbar {
    flex: none;
    display: flex;
    height: 40px;
    padding-left: 2px;
    border-top: 1px solid #1c3c5c;
    background:
        linear-gradient(to top right, transparent 40%, rgba(190, 222, 250, .8) 50%, transparent 60%) 880px 0 / 90px 39px no-repeat,
        linear-gradient(90deg, #17507e 0, #2a7db0 60px, #3d9bcd 260px, #2b8cc0 420px, #49a4d8 480px, #2d86c4 640px, #2980c8 780px, #1f6bae 870px, #2c76bc 920px, #1c63ab 1080px, #163f6e 1130px, #12305a 100%);
}
.taskbar button {
    flex: none;
    border: 0;
    background: none;
}
.orb {
    width: 36px;
    margin: 0 11px 0 -2px;
}
.orb svg {
    width: 36px;
    height: 36px;
}
.taskbar .task {
    width: 60px;
    margin-right: 2px;
    border: 1px solid #123f60;
    border-radius: 3px;
    box-shadow: inset 0 0 0 1px #a5d3ea;
    background: linear-gradient(135deg, #c3dfec, #5fa6cc 50%, #4898c6);
}
.taskbar .double {
    width: 55px;
    margin: 0 6px 0 2px;
}
.taskbar .plain {
    border-color: transparent;
    margin-right: 3px;
    box-shadow: none;
    background: linear-gradient(135deg, #338fc3, #49a8da);
}
.taskbar .active {
    background: linear-gradient(135deg, #e8f3f9, #b9d9ec);
}
.task svg {
    display: block;
    width: 34px;
    height: 32px;
    margin: auto;
}
.tray {
    display: flex;
    align-items: center;
    margin-left: auto;
    color: #fff;
    font-family: "Open Sans", sans-serif;
}
.lang {
    padding-bottom: 6px;
    font-size: 12px;
}
.up {
    width: 9px;
    height: 5px;
    margin: 3px 12px 0 16px;
}
.flag {
    width: 16px;
    height: 16px;
}
.signal {
    width: 16px;
    height: 12px;
    margin: 2px 8px 0;
}
.sound {
    width: 16px;
    height: 14px;
}
.clock {
    margin: 0 12px 0 17px;
    line-height: 17px;
    text-align: center;
}
.taskbar .show {
    width: 14px;
    border: 1px solid #7f9fbd;
    background: linear-gradient(135deg, #56789b, #1c3f6b);
}
```
